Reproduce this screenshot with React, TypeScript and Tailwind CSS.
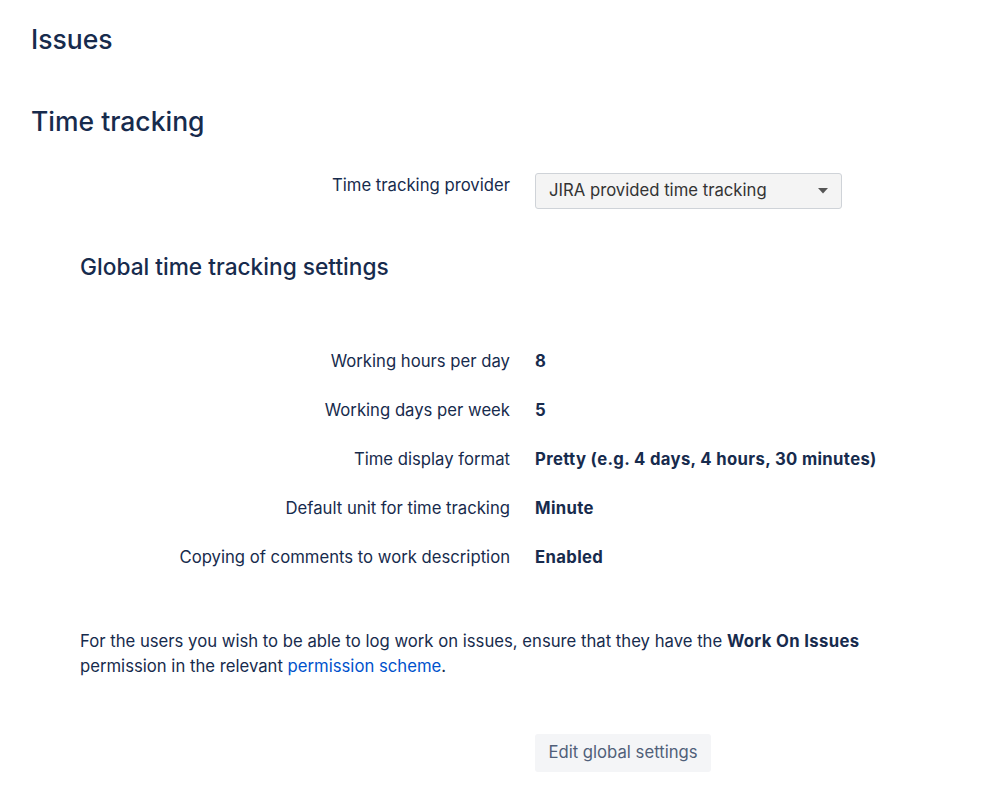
import React from "react";

const rows: [string, string][] = [
  ["Working hours per day", "8"],
  ["Working days per week", "5"],
  ["Time display format", "Pretty (e.g. 4 days, 4 hours, 30 minutes)"],
  ["Default unit for time tracking", "Minute"],
  ["Copying of comments to work description", "Enabled"],
];

export default function App() {
  return (
    <div
      className="min-h-[789px] w-[999px] bg-white px-[31px] pt-[23px] text-[#172b4d]"
      style={{ fontFamily: "Inter, 'Noto Sans', 'Liberation Sans', sans-serif" }}
    >
      <h1 className="text-[26.5px] leading-[32px] font-medium">Issues</h1>
      <h2 className="mt-[50px] text-[26.5px] leading-[32px] font-medium">Time tracking</h2>

      <div className="mt-[36px] grid grid-cols-[479px_1fr] gap-x-[25px]">
        <div className="text-right text-[16.7px] leading-[24px]">Time tracking provider</div>
        <div>
          <div className="flex h-[36px] w-[307px] items-center justify-between rounded-[3px] border border-[#cfd3d8] bg-[#f4f4f4] pl-[13px] pr-[13px] text-[16.7px] text-[#333333]">
            <span>JIRA provided time tracking</span>
            <svg width="10" height="6" viewBox="0 0 10 6">
              <path d="M0 0 L10 0 L5 5.5 Z" fill="#555" />
            </svg>
          </div>
        </div>
      </div>

      <div className="ml-[49px]">
        <h3 className="mt-[44px] text-[22.7px] leading-[28px] font-medium">Global time tracking settings</h3>
      </div>

      <div className="mt-[56px] grid grid-cols-[479px_1fr] gap-x-[25px]">
        {rows.map(([label, value]) => (
          <React.Fragment key={label}>
            <div className="flex h-[49px] items-center justify-end text-[16.7px]">{label}</div>
            <div className="flex h-[49px] items-center text-[16.7px] font-bold tracking-[0.35px]">{value}</div>
          </React.Fragment>
        ))}
      </div>

      <p className="ml-[49px] mt-[47px] w-[820px] text-[16.7px] leading-[25px]">
        For the users you wish to be able to log work on issues, ensure that they have the{" "}
        <b className="font-bold tracking-[0.35px]">Work On Issues</b> permission in the relevant{" "}
        <a className="text-[#0052cc]" href="#">permission scheme</a>.
      </p>

      <div className="mt-[55px] grid grid-cols-[479px_1fr] gap-x-[25px]">
        <div />
        <div>
          <button className="h-[38px] w-[176px] rounded-[3px] bg-[#f4f5f7] text-[16.7px] text-[#505f79]">
            Edit global settings
          </button>
        </div>
      </div>
    </div>
  );
}
